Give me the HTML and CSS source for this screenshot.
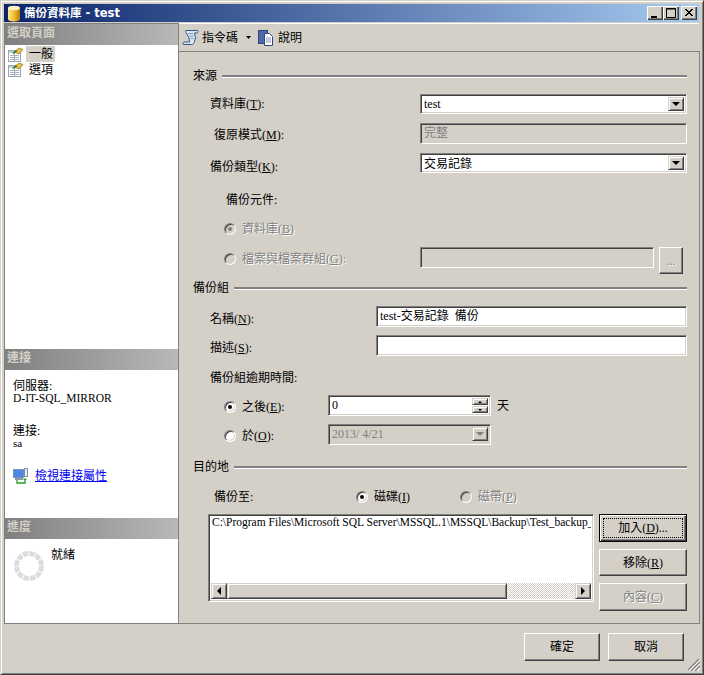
FILE: index.html
```html
<!DOCTYPE html>
<html lang="zh-Hant">
<head>
<meta charset="utf-8">
<title>備份資料庫 - test</title>
<link rel="stylesheet" href="styles.css">
</head>
<body>
<div class="window">
  <div class="titlebar">
    <svg class="title-icon" width="14" height="17" viewBox="0 0 14 17"><defs><linearGradient id="cyl" x1="0" x2="1" y1="0" y2="0"><stop offset="0" stop-color="#fbe88c"/><stop offset=".5" stop-color="#f0c030"/><stop offset="1" stop-color="#b87808"/></linearGradient></defs><path d="M1 3v11c0 1.500 2.700 2.500 6 2.500s6-1 6-2.500V3z" fill="url(#cyl)"/><ellipse cx="7" cy="3" rx="6" ry="2.300" fill="#fdf2c0"/></svg>
    <span class="title-text">備份資料庫 - test</span>
    <div class="win-buttons">
      <span class="win-btn"><svg width="16" height="14" viewBox="0 0 16 14"><rect x="4" y="10" width="6" height="2" fill="#000"/></svg></span>
      <span class="win-btn"><svg width="16" height="14" viewBox="0 0 16 14"><path d="M3.500 2.500h9v9h-9zM3 3h10" fill="none" stroke="#000"/></svg></span>
      <span class="win-btn win-close"><svg width="16" height="14" viewBox="0 0 16 14"><path d="M4 3l7 7M5 3l7 7M11 3l-7 7M12 3l-7 7" stroke="#000" fill="none"/></svg></span>
    </div>
  </div>
  <div class="main">
    <aside class="side">
      <div class="side-head">選取頁面</div>
      <div class="pages">
        <div class="page-item">
          <svg class="page-icon" width="16" height="15" viewBox="0 0 16 15"><rect x="0.500" y="3.500" width="12" height="11" fill="#fff" stroke="#9aa4b8"/><rect x="1" y="4" width="8" height="2" fill="#c8d0e0"/><path d="M2 8.500h9M2 10.500h9M2 12.500h9M6.500 7v7" stroke="#a8b0c0"/><path d="M6 5l5-4 4 1.500L11 7z" fill="#e8c040" stroke="#806818" stroke-width=".6"/><path d="M4 6l4-3 1.500 1L6 7z" fill="#40803c"/></svg>
          <span class="page-label is-current">一般</span>
        </div>
        <div class="page-item">
          <svg class="page-icon" width="16" height="15" viewBox="0 0 16 15"><rect x="0.500" y="3.500" width="12" height="11" fill="#fff" stroke="#9aa4b8"/><rect x="1" y="4" width="8" height="2" fill="#c8d0e0"/><path d="M2 8.500h9M2 10.500h9M2 12.500h9M6.500 7v7" stroke="#a8b0c0"/><path d="M6 5l5-4 4 1.500L11 7z" fill="#e8c040" stroke="#806818" stroke-width=".6"/><path d="M4 6l4-3 1.500 1L6 7z" fill="#40803c"/></svg>
          <span class="page-label">選項</span>
        </div>
      </div>
      <div class="side-head">連接</div>
      <div class="conn">
        <div class="conn-line">伺服器:</div>
        <div class="conn-line conn-server">D-IT-SQL_MIRROR</div>
        <div class="conn-line conn-gap">連接:</div>
        <div class="conn-line conn-user">sa</div>
        <div class="conn-link">
          <svg width="16" height="16" viewBox="0 0 16 16"><rect x="0.500" y="1.500" width="10" height="8" fill="#4a88e8" stroke="#7890b8"/><rect x="2" y="10" width="8" height="2" fill="#9098a8"/><rect x="11.500" y="0.500" width="3" height="8" fill="#e8ecf4" stroke="#8090a8"/><path d="M4 12v3h8v-4" fill="none" stroke="#20a020" stroke-width="1.300"/><path d="M10 12l2-2 2 2z" fill="#20a020"/></svg>
          <a class="link" href="#">檢視連接屬性</a>
        </div>
      </div>
      <div class="side-head">進度</div>
      <div class="progress">
        <svg class="spinner" width="30" height="30" viewBox="0 0 30 30"><circle cx="15" cy="15" r="12.500" fill="none" stroke="#dcdcdc" stroke-width="5" stroke-dasharray="5.500 1.045"/></svg>
        <span class="progress-text">就緒</span>
      </div>
    </aside>
    <section class="content">
      <div class="toolbar">
        <svg width="17" height="17" viewBox="0 0 17 17"><path d="M4 1.500h11.500c1 0 1 2-.5 2.500h-2.500l1 5-1 3.500c-.5 2-1.500 3-3 3H2c-1.500 0-1.500-2 0-2.500h5.500l-.5-4-3-5.500c-.5-1-.5-2 0-2z" fill="#dce6f2" stroke="#34588c"/><path d="M6 4.500h5M7.500 7h4M8.500 9.500h3" stroke="#7c94b8"/></svg>
        <span class="tool-text tool-script">指令碼</span>
        <svg class="tool-caret" width="5" height="3" viewBox="0 0 5 3"><path d="M0 0h5L2.500 3z" fill="#000"/></svg>
        <svg class="tool-help" width="16" height="16" viewBox="0 0 16 16"><rect x="0.500" y="0.500" width="9" height="13" fill="#5068a8" stroke="#304880"/><path d="M6.500 3.500h5l3 3v9h-8z" fill="#fff" stroke="#304880"/><path d="M8 8h5M8 10h5M8 12h5" stroke="#8098c0"/></svg>
        <span class="tool-text">說明</span>
      </div>
      <div class="form">
        <div class="legend"><span>來源</span><i class="rule"></i></div>

        <div class="row row-db">
          <label class="lbl lbl-wide">資料庫(<u>T</u>):</label>
          <div class="field combo"><span class="val">test</span><span class="drop"><i class="tri"></i></span></div>
        </div>
        <div class="row row-recovery">
          <label class="lbl lbl-wide lbl-in">復原模式(<u>M</u>):</label>
          <div class="field readonly"><span class="val val-off">完整</span></div>
        </div>
        <div class="row row-type">
          <label class="lbl lbl-wide lbl-type">備份類型(<u>K</u>):</label>
          <div class="field combo"><span class="val val-low">交易記錄</span><span class="drop"><i class="tri"></i></span></div>
        </div>
        <div class="row row-comp"><span class="lbl lbl-comp">備份元件:</span></div>
        <div class="row row-radio1">
          <span class="radio-wrap"><i class="radio radio-off is-on"></i><span class="off">資料庫(<u>B</u>)</span></span>
        </div>
        <div class="row row-files">
          <span class="radio-wrap radio-files"><i class="radio radio-off"></i><span class="off">檔案與檔案群組(<u>G</u>):</span></span>
          <div class="field readonly field-files"></div>
          <span class="btn btn-dots off">...</span>
        </div>

        <div class="legend legend-set"><span>備份組</span><i class="rule"></i></div>
        <div class="row row-name">
          <label class="lbl lbl-set">名稱(<u>N</u>):</label>
          <div class="field"><span class="val">test-交易記錄&nbsp; 備份</span></div>
        </div>
        <div class="row row-desc">
          <label class="lbl lbl-set">描述(<u>S</u>):</label>
          <div class="field"></div>
        </div>
        <div class="row row-exp"><span class="lbl lbl-down">備份組逾期時間:</span></div>
        <div class="row row-after">
          <span class="radio-wrap radio-date"><i class="radio is-on"></i><span>之後(<u>E</u>):</span></span>
          <div class="field field-date"><span class="val">0</span>
            <span class="spin"><span class="spin-btn"><i class="tri-mini tri-up"></i></span><span class="spin-btn"><i class="tri-mini"></i></span></span>
          </div>
          <span class="unit">天</span>
        </div>
        <div class="row row-on">
          <span class="radio-wrap radio-date"><i class="radio"></i><span>於(<u>O</u>):</span></span>
          <div class="field readonly field-date combo"><span class="val val-off">2013/ 4/21</span><span class="drop"><i class="tri tri-off"></i></span></div>
        </div>

        <div class="legend legend-dest"><span>目的地</span><i class="rule"></i></div>
        <div class="row row-to">
          <span class="lbl lbl-to">備份至:</span>
          <span class="radio-wrap radio-disk"><i class="radio is-on"></i><span>磁碟(<u>I</u>)</span></span>
          <span class="radio-wrap"><i class="radio radio-off"></i><span class="off">磁帶(<u>P</u>)</span></span>
        </div>
        <div class="dest">
          <div class="listbox">
            <div class="list-text">C:\Program Files\Microsoft SQL Server\MSSQL.1\MSSQL\Backup\Test_backup_2</div>
            <div class="hscroll">
              <span class="sb-btn"><i class="tri-left"></i></span>
              <span class="sb-thumb"></span>
              <span class="sb-track"></span>
              <span class="sb-btn"><i class="tri-right"></i></span>
            </div>
          </div>
          <div class="dest-btns">
            <span class="btn btn-default"><span class="focus">加入(<u>D</u>)...</span></span>
            <span class="btn btn-remove">移除(<u>R</u>)</span>
            <span class="btn btn-props"><span class="off">內容(<u>C</u>)</span></span>
          </div>
        </div>
      </div>
    </section>
  </div>
  <div class="footer">
    <span class="btn btn-foot">確定</span>
    <span class="btn btn-foot">取消</span>
    <svg class="grip" width="13" height="13" viewBox="0 0 13 13"><path d="M12 1L1 12M13 4L4 13M13 8l-5 5" stroke="#808080" stroke-width="1.200" fill="none"/><path d="M13 2L2 13M13 6l-7 7M13 10l-3 3" stroke="#fff" fill="none"/></svg>
  </div>
</div>
</body>
</html>
```
FILE: styles.css
```css
* { box-sizing: border-box; }
html, body { margin: 0; padding: 0; }
body {
  width: 704px;
  height: 675px;
  overflow: hidden;
  background: #d4d0c8;
  color: #000;
  font: 12px/14px "Liberation Serif", "Noto Sans CJK TC", serif;
}
i { display: block; }
.window {
  width: 704px;
  height: 675px;
  border: 1px solid;
  border-color: #d4d0c8 #404040 #404040 #d4d0c8;
  box-shadow: inset 1px 1px #fff, inset -1px -1px #808080;
  display: flex;
  flex-direction: column;
  padding: 3px;
}
.titlebar {
  height: 18px;
  margin-right: 1px;
  display: flex;
  align-items: center;
  padding-left: 3px;
  background: linear-gradient(90deg, #0a246a, #a6caf0);
  color: #fff;
  font-weight: bold;
  flex: none;
}
.title-icon { margin-right: 3px; flex: none; }
.title-text { font-family: "DejaVu Sans", "Noto Sans CJK TC", sans-serif; font-size: 11.500px; }
.win-buttons { margin-left: auto; display: flex; padding-right: 2px; }
.win-btn {
  width: 16px;
  height: 14px;
  background: #d4d0c8;
  box-shadow: inset 1px 1px #fff, inset -1px -1px #404040, inset -2px -2px #808080;
  display: block;
}
.win-btn svg { display: block; }
.win-close { margin-left: 2px; }

.main {
  margin-top: 1px;
  height: 601px;
  display: flex;
  flex: none;
}
.side {
  width: 175px;
  flex: none;
  background: #fff;
  border: 1px solid #808080;
  border-top: 0;
  display: flex;
  flex-direction: column;
}
.side-head {
  height: 21px;
  padding: 2px 0 0 2px;
  flex: none;
  background: linear-gradient(90deg, #808080, #b8b8b8);
  color: #d4d0c8;
  font-weight: bold;
}
.side > .side-head:first-child { height: 22px; border-top: 1px solid #808080; }
.pages { height: 304px; flex: none; padding-top: 1px; }
.page-item { height: 15px; display: flex; align-items: center; padding-left: 3px; }
.page-item:first-child { height: 16px; }
.page-icon { flex: none; margin-right: 2px; }
.page-label { padding: 1px 2px 1px 3px; }
.is-current { background: #d4d0c8; }
.conn { height: 148px; flex: none; padding: 10px 0 0 8px; }
.conn-line { height: 12px; line-height: 12px; }
.conn-server { font-size: 11.500px; }
.conn-user { font-size: 11px; }
.conn-gap { margin-top: 21px; }
.conn-link { display: flex; align-items: center; margin-top: 19px; height: 16px; gap: 6px; }
.link { color: #0000ee; text-decoration: underline; }
.progress { flex: 1; display: flex; padding: 12px 0 0 9px; align-items: flex-start; }
.spinner { flex: none; }
.progress-text { margin: -3px 0 0 7px; }

.content {
  width: 521px;
  flex: none;
  border-right: 1px solid #808080;
  border-bottom: 1px solid #808080;
  border-top: 1px solid #fff;
  display: flex;
  flex-direction: column;
}
.toolbar {
  height: 28px;
  flex: none;
  display: flex;
  align-items: center;
  padding-left: 3px;
  margin-right: -1px;
  border-bottom: 1px solid #808080;
  background: #d4d0c8;
}
.tool-text { margin-left: 4px; }
.tool-script { margin-left: 3px; }
.tool-caret { margin-left: 8px; }
.tool-help { margin-left: 7px; }

.form { padding: 16px 12px 0 14px; flex: 1; }
.legend { height: 16px; display: flex; align-items: center; }
.legend span { margin-right: 5px; }
.rule { flex: 1; height: 2px; background: #808080; box-shadow: 0 1px #fff; }
.legend-set { margin-top: 5px; }
.legend-dest { margin-top: 14px; }

.row { display: flex; align-items: center; }
.row-db { margin-top: 10px; height: 20px; }
.row-recovery { margin-top: 9px; height: 21px; }
.row-type { margin-top: 9px; height: 20px; }
.row-comp { margin-top: 18px; height: 16px; }
.row-radio1 { margin-top: 14px; height: 16px; padding-left: 31px; }
.row-files { margin-top: 10px; height: 28px; align-items: flex-start; padding-left: 31px; }
.row-name { margin-top: 10px; height: 21px; }
.row-desc { margin-top: 8px; height: 21px; }
.row-exp { margin-top: 13px; height: 16px; padding-left: 17px; }
.row-after { margin-top: 10px; height: 21px; padding-left: 31px; }
.row-on { margin-top: 8px; height: 21px; padding-left: 31px; }
.row-to { margin-top: 14px; height: 16px; }

.lbl { flex: none; }
.lbl-wide { width: 227px; padding-left: 17px; }
.lbl-in { padding-left: 21px; padding-top: 2px; }
.lbl-type { padding-top: 8px; }
.lbl-comp { padding-left: 33px; padding-top: 2px; }
.lbl-set { width: 183px; padding-left: 17px; padding-top: 4px; }
.lbl-to { width: 163px; padding-left: 21px; }
.lbl-down { padding-top: 2px; }

.field {
  flex: 1;
  height: 100%;
  display: flex;
  align-items: flex-start;
  background: #fff;
  border: 1px solid;
  border-color: #808080 #fff #fff #808080;
  box-shadow: inset 1px 1px #404040, inset -1px -1px #d4d0c8;
  padding: 2px;
}
.readonly { background: #d4d0c8; }
.val { flex: 1; padding-left: 1px; white-space: nowrap; line-height: 14px; }
.val-off { color: #808080; }
.val-low { padding-top: 1px; }
.combo { align-items: flex-start; }
.drop {
  width: 16px;
  height: 14px;
  flex: none;
  background: #d4d0c8;
  border: 1px solid;
  border-color: #d4d0c8 #404040 #404040 #d4d0c8;
  box-shadow: inset 1px 1px #fff, inset -1px -1px #808080;
  display: flex;
  align-items: center;
  justify-content: center;
}
.tri { width: 0; height: 0; border: 4px solid transparent; border-top-color: #000; border-bottom: 0; }
.tri-off { border-top-color: #808080; }
.radio-wrap { display: flex; align-items: center; gap: 6px; flex: none; }
.radio-files { width: 196px; height: 24px; }
.radio-date { width: 104px; padding-top: 2px; }
.radio-disk { width: 104px; }
.radio {
  width: 12px;
  height: 12px;
  border-radius: 50%;
  flex: none;
  position: relative;
  background: #fff;
  border: 1px solid;
  border-color: #808080 #fff #fff #808080;
  box-shadow: inset 1px 1px #404040, inset -1px -1px #d4d0c8;
}
.radio-off { background: #d4d0c8; }
.is-on::after {
  content: "";
  position: absolute;
  left: 3px;
  top: 3px;
  width: 4px;
  height: 4px;
  border-radius: 50%;
  background: #000;
}
.radio-off.is-on::after { background: #808080; }
.off { color: #808080; text-shadow: 1px 1px #fff; }
.field-files { flex: none; width: 234px; height: 21px; }
.btn {
  display: flex;
  align-items: center;
  justify-content: center;
  flex: none;
  background: #d4d0c8;
  border: 1px solid;
  border-color: #fff #404040 #404040 #fff;
  box-shadow: inset -1px -1px #808080;
}
.btn-dots { width: 24px; height: 27px; margin-left: 5px; }
.field-date { flex: none; width: 163px; position: relative; }
.spin { width: 16px; height: 100%; flex: none; display: flex; flex-direction: column; gap: 1px; }
.spin-btn {
  flex: 1;
  background: #d4d0c8;
  border: 1px solid;
  border-color: #d4d0c8 #404040 #404040 #d4d0c8;
  box-shadow: inset 1px 1px #fff, inset -1px -1px #808080;
  display: flex;
  align-items: center;
  justify-content: center;
}
.tri-mini { width: 0; height: 0; border: 2px solid transparent; border-top-color: #000; border-bottom: 0; }
.tri-up { border-top: 0; border-bottom: 2px solid #000; }
.unit { margin-left: 6px; }

.dest { display: flex; margin-top: 9px; padding-left: 15px; }
.listbox {
  width: 386px;
  height: 88px;
  flex: none;
  background: #fff;
  border: 1px solid;
  border-color: #808080 #fff #fff #808080;
  box-shadow: inset 1px 1px #404040, inset -1px -1px #d4d0c8;
  padding: 1px 2px 2px;
  display: flex;
  flex-direction: column;
}
.list-text { flex: 1; overflow: hidden; white-space: nowrap; padding-left: 1px; font-size: 11.500px; line-height: 12px; }
.hscroll { height: 16px; display: flex; flex: none; }
.sb-btn {
  width: 16px;
  flex: none;
  background: #d4d0c8;
  border: 1px solid;
  border-color: #d4d0c8 #404040 #404040 #d4d0c8;
  box-shadow: inset 1px 1px #fff, inset -1px -1px #808080;
  display: flex;
  align-items: center;
  justify-content: center;
}
.sb-thumb {
  width: 280px;
  flex: none;
  background: #d4d0c8;
  border: 1px solid;
  border-color: #d4d0c8 #404040 #404040 #d4d0c8;
  box-shadow: inset 1px 1px #fff, inset -1px -1px #808080;
}
.sb-track { flex: 1; background: repeating-conic-gradient(#d4d0c8 0 25%, #fff 0 50%) 0 0 / 2px 2px; }
.tri-left { width: 0; height: 0; border: 4px solid transparent; border-right-color: #000; border-left: 0; }
.tri-right { width: 0; height: 0; border: 4px solid transparent; border-left-color: #000; border-right: 0; }
.dest-btns { margin-left: 5px; width: 88px; flex: none; display: flex; flex-direction: column; }
.dest-btns .btn { width: 88px; }
.btn-default {
  height: 28px;
  border: 1px solid #000;
  box-shadow: inset 1px 1px #fff, inset -1px -1px #404040, inset -2px -2px #808080;
  padding: 3px;
}
.focus { flex: 1; align-self: stretch; display: flex; align-items: center; justify-content: center; border: 1px dotted #000; }
.btn-remove { height: 27px; margin-top: 7px; }
.btn-props { height: 28px; margin-top: 7px; }

.footer {
  flex: 1;
  display: flex;
  justify-content: flex-end;
  gap: 8px;
  padding: 9px 16px 0 0;
  position: relative;
}
.btn-foot { width: 76px; height: 28px; }
.grip { position: absolute; right: 0; bottom: 0; }
```
